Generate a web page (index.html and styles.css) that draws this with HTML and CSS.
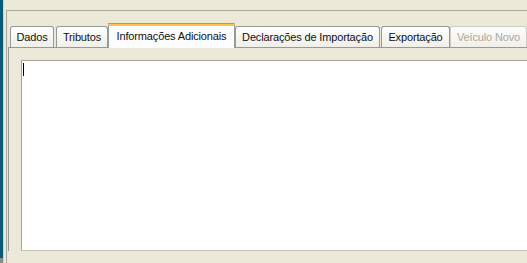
FILE: index.html
```html
<!DOCTYPE html>
<html lang="pt">
<head>
    <meta charset="UTF-8">
    <title>Informações Adicionais</title>
    <link rel="stylesheet" href="styles.css">
</head>
<body>
<div class="window">
    <div class="side_strip"></div>
    <div class="main">
        <div class="group_box">
            <ul class="tab_strip">
                <li class="tab tab_dados">Dados</li>
                <li class="tab tab_tributos">Tributos</li>
                <li class="tab tab_info active">Informações Adicionais</li>
                <li class="tab tab_decl">Declarações de Importação</li>
                <li class="tab tab_export">Exportação</li>
                <li class="tab tab_veiculo disabled">Veículo Novo</li>
            </ul>
            <div class="tab_panel">
                <div class="memo">
                    <span class="caret"></span>
                </div>
            </div>
        </div>
    </div>
</div>
</body>
</html>
```

FILE: styles.css
```css
body {
    margin: 0;
    background-color: #ece9d8;
    font-family: Tahoma, "Liberation Sans", Arial, sans-serif;
    font-size: 11px;
    overflow: hidden;
}

.window {
    display: flex;
    height: 263px;
    overflow: hidden;
}

.side_strip {
    width: 3px;
    flex: none;
    background: linear-gradient(#0b5a78 0, #0b5a78 258px, #8a8a8a 258px);
    border-right: 1px solid #d4d0c8;
}

.main {
    flex: 1;
    padding-left: 2px;
    min-width: 0;
}

.group_box {
    margin-top: 10px;
    border-left: 1px solid #aca899;
    border-top: 1px solid #aca899;
    padding: 12px 0 0 1px;
    height: 240px;
}

.tab_strip {
    display: flex;
    align-items: flex-end;
    list-style: none;
    margin: 0;
    padding: 0 0 0 2px;
    height: 24px;
    position: relative;
    z-index: 1;
}

.tab {
    box-sizing: border-box;
    height: 21px;
    border: 1px solid #919b9c;
    border-bottom: none;
    border-radius: 3px 3px 0 0;
    background: linear-gradient(#fdfdfd, #f0efe9);
    color: #111;
    text-align: center;
    line-height: 20px;
    white-space: nowrap;
    letter-spacing: -0.15px;
}

.tab_dados { width: 44px; margin-right: 2px; }
.tab_tributos { width: 52px; }
.tab_info { width: 127px; }
.tab_decl { width: 145px; margin-right: 1px; }
.tab_export { width: 69px; }
.tab_veiculo { width: 77px; }

.tab.active {
    height: 25px;
    margin-bottom: -1px;
    background: #fcfcfe;
    border-top: 3px solid #ffc73c;
    line-height: 20px;
    position: relative;
}

.tab.active:before {
    content: '';
    position: absolute;
    left: -1px;
    right: -1px;
    top: -3px;
    height: 1px;
    background: #e68b2c;
    border-radius: 3px 3px 0 0;
}

.tab.disabled {
    color: #aca899;
    border-color: #cfcdc2;
}

.tab_panel {
    border-left: 1px solid #919b9c;
    border-top: 1px solid #919b9c;
    padding: 12px 0 0 12px;
}

.memo {
    height: 189px;
    background: #fff;
    border-top: 1px solid #a7a696;
    border-left: 1px solid #a7a696;
    border-bottom: 1px solid #c3c0af;
    position: relative;
}

.caret {
    position: absolute;
    left: 1px;
    top: 2px;
    width: 1px;
    height: 13px;
    background: #000;
}
```
